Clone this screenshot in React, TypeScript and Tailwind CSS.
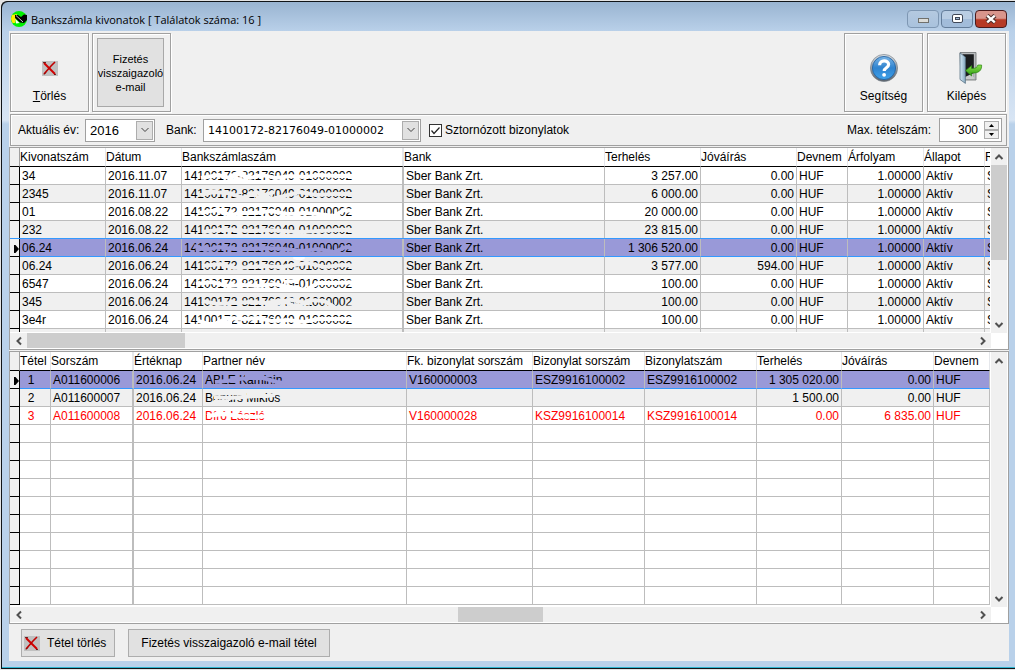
import React, { useState } from 'react';
import clsx from 'clsx';

interface Smear {
  cx: number;
  cy: number;
  rx: number;
}

interface Statement {
  no: string;
  date: string;
  debit: string;
  credit: string;
  scratch: string;
  smear?: Smear;
}

interface Item {
  no: string;
  serial: string;
  date: string;
  partner: string;
  ref: string;
  docSerial: string;
  docNo: string;
  debit: string;
  credit: string;
  scratch: string;
  cancelled?: boolean;
}

const ACCOUNT = '14100172-82176049-01000002';

const statements: Statement[] = [
  { no: '34', date: '2016.11.07', debit: '3 257.00', credit: '0.00', scratch: 'M17 9 L34 6 L46 9 L54 5 L66 9 L78 6 L92 9 L106 7 L122 8 L134 6 L152 7 L176 7 M46 12 L64 11 M50 5 L60 5' },
  { no: '2345', date: '2016.11.07', debit: '6 000.00', credit: '0.00', scratch: 'M16 8 L30 5 L44 6 L60 11 L72 5 L88 12 L104 8 L116 5 L132 8 L150 7 L176 7 M18 5 L34 4 M72 11 L90 5' },
  { no: '01', date: '2016.08.22', debit: '20 000.00', credit: '0.00', smear: { cx: 156, cy: 0, rx: 11 }, scratch: 'M16 8 L32 5 L46 10 L58 8 L72 8 L86 6 L104 9 L120 8 L134 9 L150 11 L160 5 L176 7 M30 5 L40 5' },
  { no: '232', date: '2016.08.22', debit: '23 815.00', credit: '0.00', scratch: 'M18 9 L34 7 L50 7 L66 8 L84 7 L100 8 L118 9 L134 8 L152 7 L176 7' },
  { no: '06.24', date: '2016.06.24', debit: '1 306 520.00', credit: '0.00', scratch: 'M10 5 L22 9 L34 6 L50 8 L66 8 L84 7 L100 8 L118 10 L134 8 L150 11 L162 6 L176 8 M12 10 L24 5' },
  { no: '06.24', date: '2016.06.24', debit: '3 577.00', credit: '594.00', smear: { cx: 115, cy: 0, rx: 6 }, scratch: 'M18 7 L36 5 L50 9 L66 8 L82 7 L96 8 L110 6 L124 4 L140 8 L158 6 L176 7' },
  { no: '6547', date: '2016.06.24', debit: '100.00', credit: '0.00', smear: { cx: 138, cy: 0, rx: 19 }, scratch: 'M12 7 L28 5 L44 9 L60 8 L74 9 L90 7 L106 10 L122 13 L134 6 L152 6 L176 5 M100 5 L112 4' },
  { no: '345', date: '2016.06.24', debit: '100.00', credit: '0.00', scratch: 'M18 6 L34 9 L50 8 L66 7 L82 8 L98 5 L112 12 L126 5 L140 6 L152 13 L176 12 M84 12 L104 5 M104 4 L126 9' },
  { no: '3e4r', date: '2016.06.24', debit: '100.00', credit: '0.00', scratch: 'M14 8 L28 12 L44 5 L60 6 L74 5 L88 8 L104 7 L120 9 L134 6 L152 6 L176 6 M20 12 L48 9' },
];

const items: Item[] = [
  { no: '1', serial: 'A011600006', date: '2016.06.24', partner: 'ABLE Kaminin', ref: 'V160000003', docSerial: 'ESZ9916100002', docNo: 'ESZ9916100002', debit: '1 305 020.00', credit: '0.00', scratch: 'M10 9 L22 8 L34 6 L44 5 L58 5 L72 9 L84 11 M40 3 L48 3' },
  { no: '2', serial: 'A011600007', date: '2016.06.24', partner: 'Bonurs Miklós', ref: '', docSerial: '', docNo: '', debit: '1 500.00', credit: '0.00', scratch: 'M9 6 L24 7 L38 6 L50 5 L62 5 L70 4 M9 11 L24 11 M42 3 L60 3' },
  { no: '3', serial: 'A011600008', date: '2016.06.24', partner: 'Bíró László', ref: 'V160000028', docSerial: 'KSZ9916100014', docNo: 'KSZ9916100014', debit: '0.00', credit: '6 835.00', scratch: 'M2 7 L18 5 L34 7 L48 8 L64 7', cancelled: true },
];

const EMPTY_ROWS = Array.from({ length: 10 }, (_, i) => i);

const grid = 'w-full table-fixed border-separate border-spacing-0 text-xs leading-4 whitespace-nowrap';
const headCell = 'h-[19px] overflow-hidden border-b border-black border-r border-r-gray-200 p-0 text-left font-normal';
const cell = 'h-[18px] overflow-hidden border-r border-b border-[#bdbdbd] px-0.5 py-0';
const markerCell = 'h-[18px] border-r border-b border-black bg-[#f0f0f0] p-0';

function AppLogo() {
  return (
    <svg viewBox="0 0 16 16" className="mt-1 size-4" aria-hidden="true">
      <circle cx="8" cy="8" r="8" fill="#00f000" />
      <path d="M1 4 L6 3 L4 12 L1.5 12 L0 8 Z" fill="#ffee00" />
      <path d="M4 4 L7 4 L10 6 L13 3.5 L16 4 L16 9 L13 12 L9 11.5 L4 7 Z" fill="#000" />
      <path d="M5 4.5 L12 11" stroke="#fff" strokeWidth="0.8" />
      <path d="M4.5 8 L8.5 12 L5 12.5 Z" fill="#fff" />
    </svg>
  );
}

function CrossIcon() {
  return (
    <svg viewBox="0 0 16 15" className="h-[15px] w-4 shrink-0" aria-hidden="true">
      <rect width="16" height="15" fill="#c0c0c0" />
      <path d="M2 2 L13 13" stroke="#d00000" strokeWidth="2" />
      <path d="M13 1 L9 5 L2 13" stroke="#c00000" strokeWidth="1.6" fill="none" />
      <path d="M1 1.5 L4 1.5 M12 13.5 L14 13.5 M2 13.5 L4 11.5" stroke="#600000" strokeWidth="0.8" />
    </svg>
  );
}

function HelpIcon() {
  return (
    <svg viewBox="0 0 28 28" className="size-7" aria-hidden="true">
      <defs>
        <linearGradient id="ring" x1="0" y1="0" x2="0" y2="1">
          <stop offset="0" stopColor="#d8dde2" />
          <stop offset="1" stopColor="#59626c" />
        </linearGradient>
        <linearGradient id="blue" x1="0" y1="0" x2="0" y2="1">
          <stop offset="0" stopColor="#79b4e6" />
          <stop offset="0.5" stopColor="#2f83cf" />
          <stop offset="1" stopColor="#3fa2ea" />
        </linearGradient>
      </defs>
      <circle cx="14" cy="14" r="13.6" fill="url(#ring)" stroke="#6d7781" strokeWidth="0.6" />
      <circle cx="14" cy="14" r="11.6" fill="url(#blue)" stroke="#1f5e9e" strokeWidth="0.8" />
      <path d="M9.6 11.2 C9.6 5.6 18.6 5.6 18.6 10.6 C18.6 14 14.2 13.6 14.2 17" fill="none" stroke="#fff" strokeWidth="3.2" />
      <circle cx="14.1" cy="20.8" r="1.9" fill="#fff" />
    </svg>
  );
}

function ExitIcon() {
  return (
    <svg viewBox="-9 0 33 32" className="h-8 w-[33px]" aria-hidden="true">
      <defs>
        <linearGradient id="door" x1="0" y1="0" x2="1" y2="0">
          <stop offset="0" stopColor="#d7eaf6" />
          <stop offset="1" stopColor="#86a9c0" />
        </linearGradient>
        <linearGradient id="arrow" x1="0" y1="0" x2="0" y2="1">
          <stop offset="0" stopColor="#8be04a" />
          <stop offset="1" stopColor="#2c9a12" />
        </linearGradient>
      </defs>
      <path d="M1 0.5 H17 V28 H2 Z" fill="#b9bcbe" stroke="#6b6e70" strokeWidth="0.8" />
      <path d="M3.5 2.2 H14.8 V25 H6 Z" fill="#1b1d1f" />
      <path d="M6 25 L14.8 21 V27 H6 Z" fill="#c9cbcc" />
      <path d="M1 1 L6.4 5 V31.4 L1 27.5 Z" fill="url(#door)" stroke="#5b7487" strokeWidth="0.8" />
      <path d="M6.6 18.6 L12.6 13.6 V16.4 C16.4 16.6 18.4 15.6 18.8 13 H22.6 C23 18.6 19.6 21.4 12.6 21 V24 Z" fill="url(#arrow)" stroke="#2a8512" strokeWidth="0.7" />
    </svg>
  );
}

function Chevron({ className }: { className?: string }) {
  return (
    <svg viewBox="0 0 10 10" className={clsx('size-2.5', className)} fill="none" stroke="currentColor" aria-hidden="true">
      <path d="M1.5 3 L5 6.5 L8.5 3" />
    </svg>
  );
}

function Marker() {
  return (
    <svg viewBox="0 0 5 8" className="mt-0.5 ml-auto h-2 w-[5px]" aria-hidden="true">
      <path d="M0 0 H1.5 L5 4 L1.5 8 H0 Z" fill="#000" />
    </svg>
  );
}

function Scratched({ text, path, tone, smear }: { text: string; path: string; tone: string; smear?: Smear }) {
  return (
    <div className="relative">
      {text}
      <svg className="absolute top-0 left-0 h-4 w-48 overflow-visible" fill="none" aria-hidden="true">
        <path d={path} className={tone} strokeWidth="4" transform="translate(0 1)" />
        {smear && <ellipse cx={smear.cx} cy={smear.cy} rx={smear.rx} ry="2" fill="#fff" />}
      </svg>
    </div>
  );
}

function ToolPanel({ children }: { children: React.ReactNode }) {
  return <div className="h-[79px] w-[79px] border border-[#a0a0a0] shadow-[inset_1px_1px_0_#fff,1px_1px_0_#fff]">{children}</div>;
}

function ToolButton({ icon, children }: { icon: React.ReactNode; children: React.ReactNode }) {
  return (
    <button type="button" className="flex size-full flex-col items-center justify-end pb-[7px] text-xs leading-4">
      <span className="flex h-10 flex-col items-center justify-center">{icon}</span>
      {children}
    </button>
  );
}

const scrollButton = 'flex items-center justify-center text-[#505050]';

function VerticalScroll({ children }: { children?: React.ReactNode }) {
  return (
    <div className="mr-px flex w-4 shrink-0 flex-col bg-[#f0f0f0]">
      <button type="button" aria-label="Fel" className={clsx(scrollButton, 'h-[17px]')}>
        <Chevron className="rotate-180 stroke-2" />
      </button>
      <div className="flex-1">{children}</div>
      <button type="button" aria-label="Le" className={clsx(scrollButton, 'h-[17px]')}>
        <Chevron className="stroke-2" />
      </button>
    </div>
  );
}

function HorizontalScroll({ children }: { children: React.ReactNode }) {
  return (
    <div className="mr-[17px] flex h-4 shrink-0 border-b border-white bg-[#f0f0f0]">
      <button type="button" aria-label="Balra" className={clsx(scrollButton, 'w-[17px]')}>
        <Chevron className="rotate-90 stroke-2" />
      </button>
      <div className="flex flex-1">{children}</div>
      <button type="button" aria-label="Jobbra" className={clsx(scrollButton, 'w-[17px]')}>
        <Chevron className="-rotate-90 stroke-2" />
      </button>
    </div>
  );
}

function ComboArrow() {
  return (
    <span className="pointer-events-none absolute inset-y-0.5 right-0.5 flex w-[17px] items-center justify-center border border-[#adadad] bg-[#e1e1e1] text-[#404040]">
      <Chevron />
    </span>
  );
}

function StatementGrid() {
  const [selected, setSelected] = useState(4);

  return (
    <section className="shrink-0 border border-[#a0a0a0] bg-white">
      <div className="flex h-[185px]">
        <div className="min-w-0 flex-1 overflow-hidden pr-px pb-px">
          <div className="h-full overflow-hidden">
            <table className={grid}>
              <colgroup>
                <col className="w-[10px]" />
                <col className="w-[86px]" />
                <col className="w-[76px]" />
                <col className="w-[222px]" />
                <col className="w-[201px]" />
                <col className="w-[96px]" />
                <col className="w-[96px]" />
                <col className="w-[51px]" />
                <col className="w-[76px]" />
                <col className="w-[61px]" />
                <col />
              </colgroup>
              <thead>
                <tr>
                  <th className="border-r border-b border-r-[#a0a0a0] border-b-black bg-[#f0f0f0] p-0" />
                  <th className={headCell}>Kivonatszám</th>
                  <th className={headCell}>Dátum</th>
                  <th className={clsx(headCell, 'border-r-2')}>Bankszámlaszám</th>
                  <th className={headCell}>Bank</th>
                  <th className={headCell}>Terhelés</th>
                  <th className={headCell}>Jóváírás</th>
                  <th className={headCell}>Devnem</th>
                  <th className={headCell}>Árfolyam</th>
                  <th className={headCell}>Állapot</th>
                  <th className={clsx(headCell, 'border-r-0')}>R</th>
                </tr>
              </thead>
              <tbody>
                {statements.map((s, i) => {
                  const active = i === selected;
                  const c = clsx(cell, active && 'border-b-[#3399ff]');
                  const tone = active ? 'stroke-[#9999d8]' : i % 2 ? 'stroke-[#f0f0f0]' : 'stroke-white';
                  return (
                    <tr
                      key={i}
                      onClick={() => setSelected(i)}
                      className={active ? 'bg-[#9999d8] shadow-[0_-1px_0_#3399ff]' : i % 2 ? 'bg-[#f0f0f0]' : 'bg-white'}
                    >
                      <td className={markerCell}>{active && <Marker />}</td>
                      <td className={c}>{s.no}</td>
                      <td className={c}>{s.date}</td>
                      <td className={clsx(c, 'border-r-2')}>
                        <Scratched text={ACCOUNT} path={s.scratch} tone={tone} smear={s.smear} />
                      </td>
                      <td className={c}>Sber Bank Zrt.</td>
                      <td className={clsx(c, 'text-right')}>{s.debit}</td>
                      <td className={clsx(c, 'text-right')}>{s.credit}</td>
                      <td className={c}>HUF</td>
                      <td className={clsx(c, 'text-right')}>1.00000</td>
                      <td className={c}>Aktív</td>
                      <td className={clsx(c, 'border-r-0 text-clip')}>S</td>
                    </tr>
                  );
                })}
                <tr className="bg-[#f0f0f0]">
                  <td className={markerCell} />
                  <td className={cell} />
                  <td className={cell} />
                  <td className={clsx(cell, 'border-r-2')} />
                  <td className={cell} />
                  <td className={cell} />
                  <td className={cell} />
                  <td className={cell} />
                  <td className={cell} />
                  <td className={cell} />
                  <td className={clsx(cell, 'border-r-0')} />
                </tr>
              </tbody>
            </table>
          </div>
        </div>
        <VerticalScroll>
          <div className="h-[95px] bg-[#cdcdcd]" />
        </VerticalScroll>
      </div>
      <HorizontalScroll>
        <div className="w-1/6 bg-[#cdcdcd]" />
      </HorizontalScroll>
    </section>
  );
}

function ItemGrid() {
  const [selected, setSelected] = useState(0);

  return (
    <section className="mt-px flex min-h-0 flex-1 flex-col border border-[#a0a0a0] bg-white">
      <div className="flex min-h-0 flex-1">
        <div className="min-w-0 flex-1 overflow-hidden pr-px pb-px">
          <div className="h-full overflow-hidden">
            <table className={grid}>
              <colgroup>
                <col className="w-[10px]" />
                <col className="w-[31px]" />
                <col className="w-[83px]" />
                <col className="w-[69px]" />
                <col className="w-[204px]" />
                <col className="w-[126px]" />
                <col className="w-[112px]" />
                <col className="w-[112px]" />
                <col className="w-[85px]" />
                <col className="w-[92px]" />
                <col />
              </colgroup>
              <thead>
                <tr>
                  <th className="border-r border-b border-r-[#a0a0a0] border-b-black bg-[#f0f0f0] p-0" />
                  <th className={headCell}>Tétel</th>
                  <th className={clsx(headCell, 'border-r-2')}>Sorszám</th>
                  <th className={headCell}>Értéknap</th>
                  <th className={headCell}>Partner név</th>
                  <th className={headCell}>Fk. bizonylat sorszám</th>
                  <th className={headCell}>Bizonylat sorszám</th>
                  <th className={headCell}>Bizonylatszám</th>
                  <th className={headCell}>Terhelés</th>
                  <th className={headCell}>Jóváírás</th>
                  <th className={headCell}>Devnem</th>
                </tr>
              </thead>
              <tbody>
                {items.map((item, i) => {
                  const active = i === selected;
                  const c = clsx(cell, active && 'border-b-[#3399ff]');
                  const tone = active ? 'stroke-[#9999d8]' : i % 2 ? 'stroke-[#f0f0f0]' : 'stroke-white';
                  return (
                    <tr
                      key={item.no}
                      onClick={() => setSelected(i)}
                      className={clsx(
                        active ? 'bg-[#9999d8]' : i % 2 ? 'bg-[#f0f0f0]' : 'bg-white',
                        item.cancelled && 'text-[#ff0000]',
                      )}
                    >
                      <td className={markerCell}>{active && <Marker />}</td>
                      <td className={clsx(c, 'pr-2.5 text-center')}>{item.no}</td>
                      <td className={clsx(c, 'border-r-2')}>{item.serial}</td>
                      <td className={c}>{item.date}</td>
                      <td className={c}>
                        <Scratched text={item.partner} path={item.scratch} tone={tone} />
                      </td>
                      <td className={c}>{item.ref}</td>
                      <td className={c}>{item.docSerial}</td>
                      <td className={c}>{item.docNo}</td>
                      <td className={clsx(c, 'text-right')}>{item.debit}</td>
                      <td className={clsx(c, 'text-right')}>{item.credit}</td>
                      <td className={c}>HUF</td>
                    </tr>
                  );
                })}
                {EMPTY_ROWS.map(i => (
                  <tr key={i}>
                    <td className={markerCell} />
                    <td className={cell} />
                    <td className={clsx(cell, 'border-r-2')} />
                    <td className={cell} />
                    <td className={cell} />
                    <td className={cell} />
                    <td className={cell} />
                    <td className={cell} />
                    <td className={cell} />
                    <td className={cell} />
                    <td className={cell} />
                  </tr>
                ))}
              </tbody>
            </table>
          </div>
        </div>
        <VerticalScroll />
      </div>
      <HorizontalScroll>
        <div className="w-[45.5%]" />
        <div className="w-[9%] bg-[#cdcdcd]" />
      </HorizontalScroll>
    </section>
  );
}

function TitleBar() {
  const caption = 'flex h-[18px] w-8 items-center justify-center rounded-sm border';

  return (
    <header className="flex h-[29px] shrink-0 items-center px-0.5">
      <AppLogo />
      <h1 className="mt-1.5 ml-1 flex-1 font-['Open_Sans','Noto_Sans',sans-serif] text-[11px] leading-4">
        Bankszámla kivonatok [ Találatok száma: 16 ]
      </h1>
      <div className="mt-1 flex gap-0.5">
        <button type="button" aria-label="Kis méret" className={clsx(caption, 'border-[#7e97b3] bg-linear-to-b from-[#b4c9e0] to-[#a9c2dd]')}>
          <span className="mt-1 h-[5px] w-[11px] border border-[#70706c] bg-[#dcdcd8]" />
        </button>
        <button type="button" aria-label="Teljes méret" className={clsx(caption, 'border-[#647d9a] bg-linear-to-b from-[#b9cde3] from-50% to-[#a2bcda] to-50%')}>
          <span className="flex h-[9px] w-[11px] items-center justify-center rounded-xs border border-[#404858] bg-white">
            <span className="h-[3px] w-[5px] border border-[#404858] bg-[#a0b8d4]" />
          </span>
        </button>
        <button type="button" aria-label="Bezárás" className={clsx(caption, 'border-[#4a1a1c] bg-linear-to-b from-[#d9958c] from-45% to-[#b63a26] to-55%')}>
          <svg viewBox="0 0 12 10" className="h-2.5 w-3" aria-hidden="true">
            <path d="M2 1.5 L10 8.5 M10 1.5 L2 8.5" stroke="#50302c" strokeWidth="4.4" />
            <path d="M2.2 1.7 L9.8 8.3 M9.8 1.7 L2.2 8.3" stroke="#fff" strokeWidth="2.4" />
          </svg>
        </button>
      </div>
    </header>
  );
}

function FilterBar() {
  const [cancelled, setCancelled] = useState(true);
  const [max, setMax] = useState(300);

  return (
    <form className="mx-px mt-0.5 mr-0.5 flex h-8 items-center border border-[#a0a0a0] pr-1 pl-[7px] shadow-[inset_1px_1px_0_#fff]">
      <label htmlFor="year" className="w-[67px]">Aktuális év:</label>
      <div className="relative">
        <select id="year" defaultValue="2016" className="block h-[23px] w-[70px] appearance-none border border-[#a0a0a0] bg-white pt-0.5 pl-1 text-[13px]">
          <option>2016</option>
          <option>2015</option>
        </select>
        <ComboArrow />
      </div>
      <label htmlFor="bank" className="ml-[11px] w-[37px]">Bank:</label>
      <div className="relative">
        <select id="bank" className="block h-[23px] w-[218px] appearance-none border border-[#a0a0a0] bg-white pt-0.5 pl-1 font-['DejaVu_Sans',sans-serif] text-[11px]">
          <option>14100172-82176049-01000002</option>
        </select>
        <ComboArrow />
      </div>
      <label className="ml-2 flex items-center gap-[3px]">
        <span className="relative block size-[13px]">
          <input
            type="checkbox"
            checked={cancelled}
            onChange={e => setCancelled(e.target.checked)}
            className="block size-[13px] appearance-none border border-[#333] bg-white"
          />
          {cancelled && (
            <svg viewBox="0 0 13 13" className="pointer-events-none absolute inset-0" fill="none" stroke="#222" strokeWidth="1.2" aria-hidden="true">
              <path d="M2.5 6.5 L5 9.5 L10.5 3.5" />
            </svg>
          )}
        </span>
        Sztornózott bizonylatok
      </label>
      <label htmlFor="max" className="mr-2 ml-auto">Max. tételszám:</label>
      <div className="flex h-6 w-[63px] items-center border border-[#a0a0a0] bg-white pr-0.5">
        <input
          id="max"
          inputMode="numeric"
          value={max}
          onChange={e => setMax(Number(e.target.value) || 0)}
          className="w-0 flex-1 pr-1.5 text-right outline-none"
        />
        <span className="flex w-[15px] flex-col">
          <button type="button" aria-label="Növelés" onClick={() => setMax(max + 1)} className="flex h-[9px] items-center justify-center border border-[#adadad] bg-[#f0f0f0]">
            <svg viewBox="0 0 5 3" className="h-[3px] w-[5px]" aria-hidden="true"><path d="M0 3 L2.5 0 L5 3 Z" /></svg>
          </button>
          <button type="button" aria-label="Csökkentés" onClick={() => setMax(max - 1)} className="flex h-[9px] items-center justify-center border border-[#adadad] bg-[#f0f0f0]">
            <svg viewBox="0 0 5 3" className="h-[3px] w-[5px]" aria-hidden="true"><path d="M0 0 L2.5 3 L5 0 Z" /></svg>
          </button>
        </span>
      </div>
    </form>
  );
}

export default function App() {
  return (
    <div className="flex h-screen flex-col bg-[#e4e4e4] pt-px pb-px pl-px font-['Liberation_Sans',Arial,sans-serif] text-xs text-black">
      <div className="flex min-h-0 flex-1 flex-col rounded-tl-md border-t border-b border-l border-[#101418] bg-[#101418]">
        <div className="flex min-h-0 flex-1 flex-col rounded-tl-md border-b border-b-[#2fb5d0] bg-[linear-gradient(to_bottom,#99b4d1_0,#b9d0e9_29px,#d8e5f4_118px,#b9d1ea_122px)] pr-1.5 pb-1.5 pl-[7px]">
          <TitleBar />
          <main className="flex min-h-0 flex-1 flex-col bg-[#f0f0f0]">
            <div className="flex justify-between pt-0.5 pr-[3px] pl-px">
              <div className="flex gap-[3px]">
                <ToolPanel>
                  <ToolButton icon={<CrossIcon />}>
                    <span><u>T</u>örlés</span>
                  </ToolButton>
                </ToolPanel>
                <ToolPanel>
                  <div className="size-full py-1 pr-1.5 pl-1">
                    <button type="button" className="flex size-full items-center justify-center overflow-hidden border border-[#a8a8a8] bg-[#e1e1e1] text-[11px] leading-[14px]">
                      <span className="text-center">
                        Fizetés<br />visszaigazoló<br />e-mail
                      </span>
                    </button>
                  </div>
                </ToolPanel>
              </div>
              <div className="flex gap-1">
                <ToolPanel>
                  <ToolButton icon={<HelpIcon />}>Segítség</ToolButton>
                </ToolPanel>
                <ToolPanel>
                  <ToolButton icon={<ExitIcon />}>Kilépés</ToolButton>
                </ToolPanel>
              </div>
            </div>
            <FilterBar />
            <div className="mt-px flex min-h-0 flex-1 flex-col">
              <StatementGrid />
              <ItemGrid />
            </div>
            <footer className="flex shrink-0 gap-[13px] px-3 pt-[5px] pb-1">
              <button type="button" className="flex h-7 items-center gap-[7px] border border-[#adadad] bg-[#e1e1e1] pr-2 pl-0.5">
                <CrossIcon />
                Tétel törlés
              </button>
              <button type="button" className="h-7 border border-[#adadad] bg-[#e1e1e1] px-3">
                Fizetés visszaigazoló e-mail tétel
              </button>
            </footer>
          </main>
        </div>
      </div>
    </div>
  );
}
